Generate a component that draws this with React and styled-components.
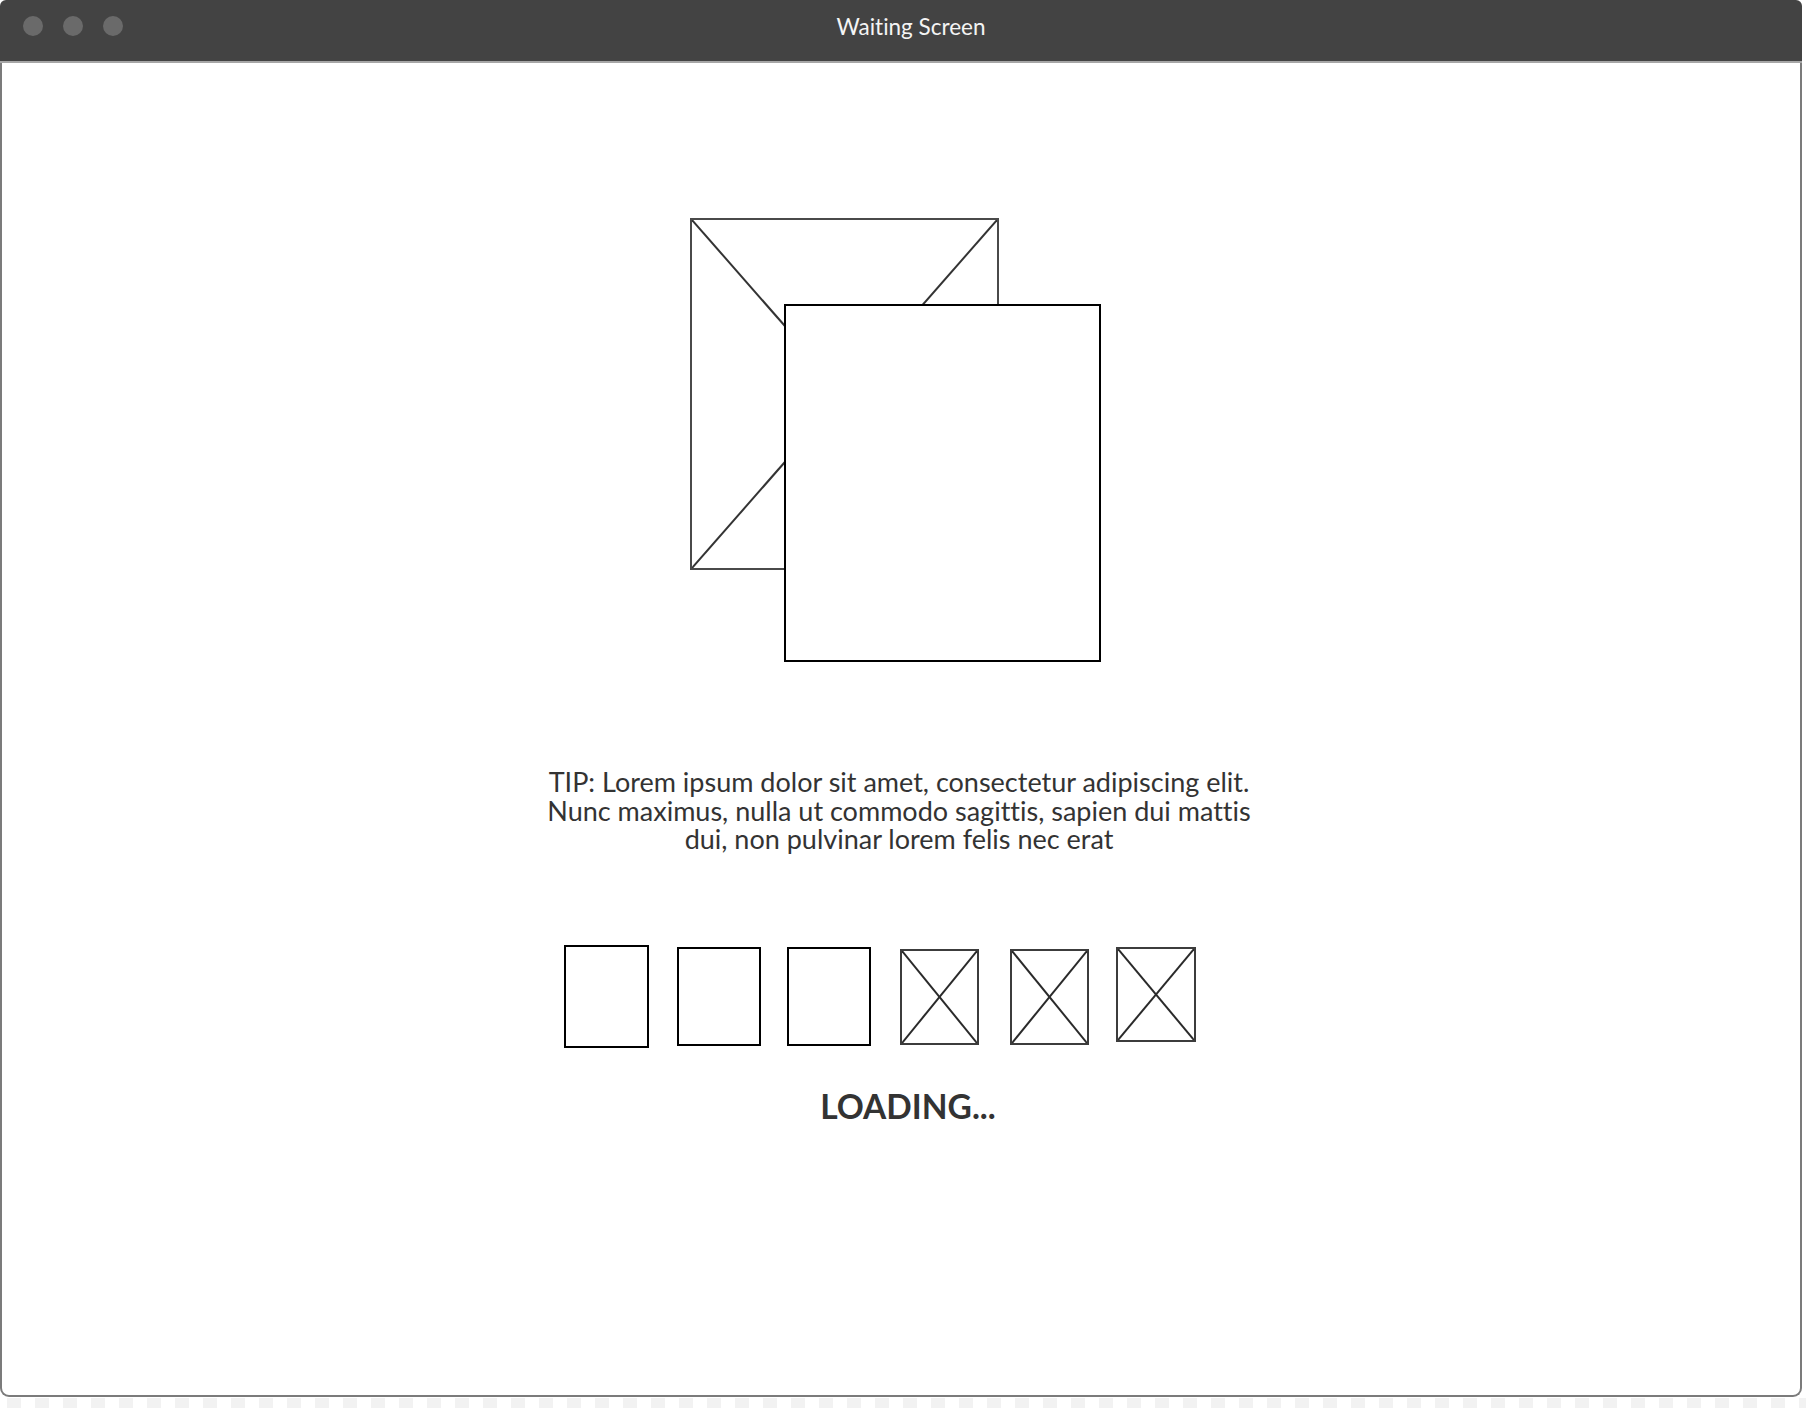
import React from 'react'
import styled, { createGlobalStyle } from 'styled-components'

const GlobalStyle = createGlobalStyle`
  html, body {
    margin: 0;
    padding: 0;
    background: #ffffff;
  }
  body {
    font-family: Lato, "Noto Sans", sans-serif;
    font-variant-ligatures: none;
  }
`

const Page = styled.div`
  width: 1806px;
  height: 1408px;
  display: flex;
  flex-direction: column;
`

const Window = styled.div`
  width: 1802px;
  height: 1397px;
  display: flex;
  flex-direction: column;
`

const TitleBar = styled.header`
  height: 63px;
  flex-shrink: 0;
  box-sizing: border-box;
  padding-bottom: 9px;
  background: #434343;
  border-radius: 6px 6px 0 0;
  border-bottom: 2px solid #a6a6a6;
  display: grid;
  grid-template-columns: 1fr auto 1fr;
  align-items: center;
`

const Lights = styled.div`
  display: flex;
  gap: 20px;
  padding-left: 23px;
`

const Light = styled.span`
  width: 20px;
  height: 20px;
  border-radius: 50%;
  background: #6a6a6a;
`

const Title = styled.h1`
  margin: 0;
  padding-left: 20px;
  font-size: 22.5px;
  font-weight: 400;
  color: #f4f4f4;
`

const Body = styled.main`
  flex: 1;
  box-sizing: border-box;
  background: #ffffff;
  border: 2px solid #7b7b7b;
  border-top: none;
  border-radius: 0 0 9px 9px;
  display: flex;
  flex-direction: column;
  align-items: center;
  padding-top: 155px;
`

const Hero = styled.div`
  position: relative;
  width: 411px;
  height: 444px;
  margin-right: 11px;
`

const Frame = styled.div`
  position: relative;
  box-sizing: border-box;
  width: ${p => p.$w}px;
  height: ${p => p.$h}px;
  margin-top: ${p => p.$top || 0}px;
  margin-left: ${p => p.$gap || 0}px;
  border: 2px solid ${p => p.$tone};
  background: #ffffff;
  flex-shrink: 0;
`

const FrontCard = styled(Frame)`
  position: absolute;
  left: 94px;
  top: 86px;
`

const Cross = styled.svg`
  position: absolute;
  inset: 0;
  width: 100%;
  height: 100%;
  display: block;
`

const Tip = styled.p`
  margin: 106px 4px 0 0;
  font-size: 27px;
  line-height: 28.5px;
  text-align: center;
  color: #333333;
`

const TileRow = styled.div`
  display: flex;
  align-items: flex-start;
  height: 103px;
  margin-top: 91px;
  margin-right: 42px;
`

const Loading = styled.div`
  margin-top: 42px;
  margin-left: 14px;
  font-size: 33.5px;
  line-height: 32px;
  font-weight: 700;
  color: #333333;
`

const Checker = styled.div`
  flex: 1;
  background: repeating-linear-gradient(
    90deg,
    #ffffff 0 7px,
    #f2f2f2 7px 21px,
    #ffffff 21px 28px
  );
  margin-top: 1px;
`

const X = ({ color }) => (
  <Cross viewBox="0 0 100 100" preserveAspectRatio="none">
    <line x1="0" y1="0" x2="100" y2="100" stroke={color} strokeWidth="2" vectorEffect="non-scaling-stroke" />
    <line x1="100" y1="0" x2="0" y2="100" stroke={color} strokeWidth="2" vectorEffect="non-scaling-stroke" />
  </Cross>
)

const tiles = [
  { w: 85, h: 103, top: 0, gap: 0, crossed: false },
  { w: 84, h: 99, top: 2, gap: 28, crossed: false },
  { w: 84, h: 99, top: 2, gap: 26, crossed: false },
  { w: 79, h: 96, top: 4, gap: 29, crossed: true },
  { w: 79, h: 96, top: 4, gap: 31, crossed: true },
  { w: 80, h: 95, top: 2, gap: 27, crossed: true },
]

export default function App() {
  return (
    <Page>
      <GlobalStyle />
      <Window>
        <TitleBar>
          <Lights>
            <Light />
            <Light />
            <Light />
          </Lights>
          <Title>Waiting Screen</Title>
          <div />
        </TitleBar>
        <Body>
          <Hero>
            <Frame $w={309} $h={352} $tone="#4a4a4a">
              <X color="#333333" />
            </Frame>
            <FrontCard $w={317} $h={358} $tone="#000000" />
          </Hero>
          <Tip>
            TIP: Lorem ipsum dolor sit amet, consectetur adipiscing elit.<br />
            Nunc maximus, nulla ut commodo sagittis, sapien dui mattis<br />
            dui, non pulvinar lorem felis nec erat
          </Tip>
          <TileRow>
            {tiles.map((t, i) => (
              <Frame
                key={i}
                $w={t.w}
                $h={t.h}
                $top={t.top}
                $gap={t.gap}
                $tone={t.crossed ? '#3c3c3c' : '#000000'}
              >
                {t.crossed && <X color="#2a2a2a" />}
              </Frame>
            ))}
          </TileRow>
          <Loading>LOADING...</Loading>
        </Body>
      </Window>
      <Checker />
    </Page>
  )
}
